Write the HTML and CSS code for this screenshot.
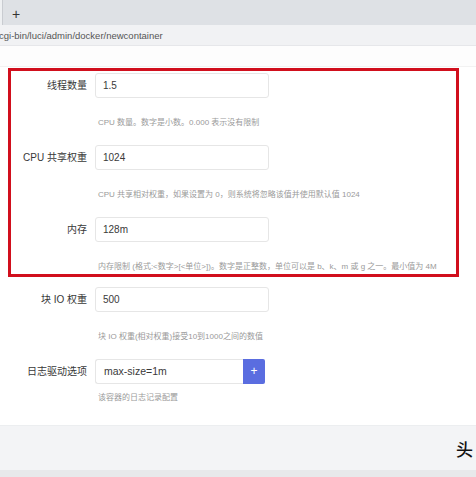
FILE: index.html
```html
<!DOCTYPE html>
<html lang="zh">
<head>
<meta charset="utf-8">
<link rel="stylesheet" href="styles.css">
</head>
<body>
<div class="tabbar"><span class="tab-edge"></span><span class="plus">+</span></div>
<div class="urlbar">cgi-bin/luci/admin/docker/newcontainer</div>
<div class="content">
  <div class="topstrip"></div>
  <div class="highlight">
    <div class="field">
      <div class="label">线程数量</div>
      <div class="control">
        <div class="input">1.5</div>
        <div class="help">CPU 数量。数字是小数。0.000 表示没有限制</div>
      </div>
    </div>
    <div class="field">
      <div class="label">CPU 共享权重</div>
      <div class="control">
        <div class="input">1024</div>
        <div class="help">CPU 共享相对权重，如果设置为 0，则系统将忽略该值并使用默认值 1024</div>
      </div>
    </div>
    <div class="field">
      <div class="label">内存</div>
      <div class="control">
        <div class="input">128m</div>
        <div class="help">内存限制 (格式:&lt;数字&gt;[&lt;单位&gt;])。数字是正整数，单位可以是 b、k、m 或 g 之一。最小值为 4M</div>
      </div>
    </div>
  </div>
  <div class="plain">
    <div class="field">
      <div class="label">块 IO 权重</div>
      <div class="control">
        <div class="input">500</div>
        <div class="help">块 IO 权重(相对权重)接受10到1000之间的数值</div>
      </div>
    </div>
    <div class="field">
      <div class="label">日志驱动选项</div>
      <div class="control">
        <div class="inputgroup">
          <div class="input grow">max-size=1m</div>
          <div class="addbtn">+</div>
        </div>
        <div class="help near">该容器的日志记录配置</div>
      </div>
    </div>
  </div>
</div>
<div class="footer"><span class="mark">头</span></div>
<div class="bottomband"></div>
</body>
</html>
```

FILE: styles.css
```css
html, body {
  margin: 0;
  padding: 0;
  background: #ffffff;
  font-family: "Liberation Sans", "Noto Sans CJK SC", sans-serif;
  overflow: hidden;
}

.tabbar {
  height: 25px;
  background: #dee1e5;
  display: flex;
  align-items: center;
  position: relative;
}

.tab-edge {
  width: 2px;
  align-self: stretch;
  background: #eef0f2;
  border-right: 1px solid #c9ccd1;
}

.plus {
  margin-left: 9px;
  margin-top: 3px;
  font-size: 14px;
  line-height: 14px;
  color: #333;
}

.urlbar {
  height: 20px;
  background: #f1f2f4;
  border-bottom: 1px solid #e6e7ea;
  font-size: 9.5px;
  line-height: 22px;
  color: #555;
  padding-left: 0;
  text-indent: -1px;
  white-space: nowrap;
}

.content {
  height: 379px;
  background: #ffffff;
}

.topstrip {
  height: 20px;
  background: #fdfdfd;
  border-bottom: 1px solid #f2f2f2;
}

.highlight {
  margin: 1px 0 0 8px;
  width: 451px;
  box-sizing: border-box;
  border: 3px solid #d10f1d;
  padding: 2px 0 1px 0;
}

.highlight .label {
  width: 76px;
}

.plain {
  margin-top: 10px;
  padding-left: 11px;
}

.plain .label {
  width: 76px;
}

.field {
  display: flex;
  margin-bottom: 16px;
}

.field:last-child {
  margin-bottom: 0;
}

.label {
  flex: none;
  height: 25px;
  line-height: 25px;
  text-align: right;
  font-size: 10px;
  color: #383838;
  white-space: nowrap;
}

.control {
  margin-left: 8px;
  display: flex;
  flex-direction: column;
}

.input {
  width: 174px;
  height: 25px;
  box-sizing: border-box;
  border: 1px solid #e6e6e6;
  border-radius: 3px;
  padding-left: 7px;
  font-size: 10px;
  line-height: 23px;
  color: #3a3a3a;
  background: #fff;
}

.inputgroup {
  display: flex;
  height: 25px;
}

.input.grow {
  width: 148px;
  border-right: none;
  border-radius: 3px 0 0 3px;
  padding-left: 8px;
  font-size: 10.5px;
}

.addbtn {
  width: 22px;
  height: 25px;
  background: #5a6de0;
  border-radius: 0 2px 2px 0;
  color: #fff;
  font-size: 12px;
  line-height: 24px;
  text-align: center;
}

.help {
  margin-top: 19px;
  margin-left: 3px;
  font-size: 8px;
  line-height: 12px;
  height: 12px;
  color: #9a9a9a;
  white-space: nowrap;
}

.help.near {
  margin-top: 8px;
}

.footer {
  height: 44px;
  background: #f3f4f6;
  border-top: 1px solid #eceef0;
  display: flex;
  justify-content: flex-end;
  align-items: center;
  overflow: hidden;
}

.mark {
  font-family: "Noto Sans CJK SC", sans-serif;
  font-size: 17px;
  line-height: 17px;
  color: #111;
  margin-right: 3px;
  font-weight: 500;
}

.bottomband {
  height: 8px;
  background: #e8e9eb;
}
```
